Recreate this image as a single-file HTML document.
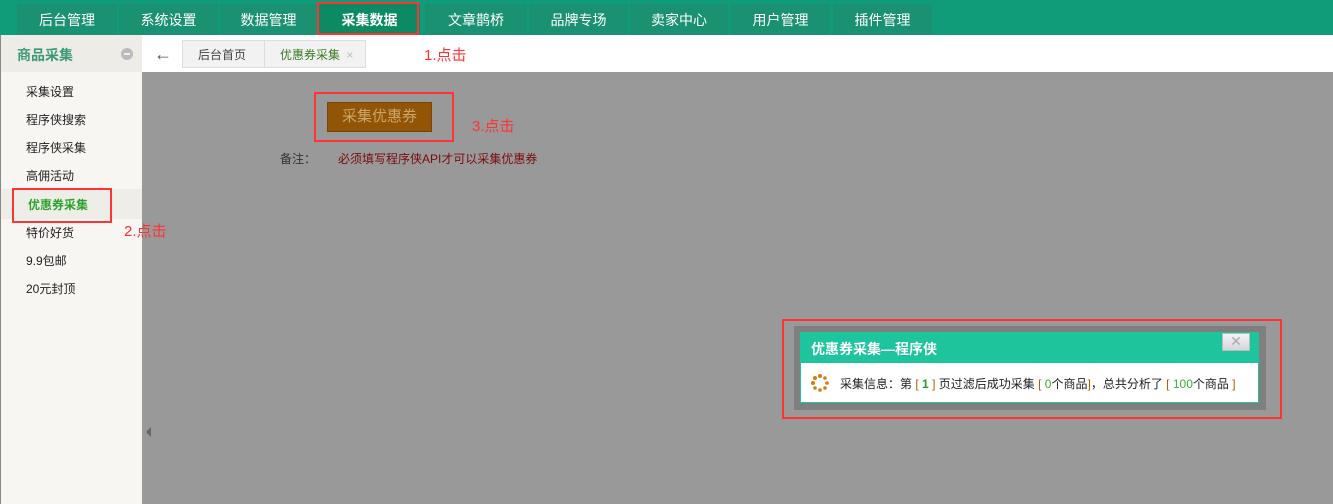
<!DOCTYPE html>
<html><head><meta charset="utf-8"><style>
*{margin:0;padding:0;box-sizing:border-box}
body{width:1333px;height:504px;overflow:hidden;background:#999;font-family:"Liberation Sans","Noto Sans CJK SC",sans-serif;font-size:12px;color:#333;position:relative}
.a{position:absolute}
#nav{left:0;top:0;width:1333px;height:35px;background:#109c79}
.t{position:absolute;top:4px;height:31px;background:#1a9271;color:#fff;font-size:14px;text-align:center;line-height:32px}
#side{left:0;top:35px;width:142px;height:469px;background:#f7f6f2;border-left:1px solid #888}
.m{position:absolute;left:25px;font-size:12px;color:#222}
.red{border:2px solid #f33}
.rt{color:#f33;font-size:15px}
</style></head><body>
<div id="nav" class="a">
<div class="t" style="left:17px;width:100px">后台管理</div>
<div class="t" style="left:119px;width:99px">系统设置</div>
<div class="t" style="left:220px;width:97px">数据管理</div>
<div class="t" style="left:319px;width:101px;background:#0b8a64;font-weight:bold">采集数据</div>
<div class="t" style="left:425px;width:102px">文章鹊桥</div>
<div class="t" style="left:529px;width:99px">品牌专场</div>
<div class="t" style="left:630px;width:98px">卖家中心</div>
<div class="t" style="left:731px;width:99px">用户管理</div>
<div class="t" style="left:833px;width:99px">插件管理</div>
</div>
<div class="a red" style="left:317px;top:2px;width:102px;height:33px"></div>
<div id="side" class="a">
<div class="a" style="left:0;top:0;width:141px;height:37px;background:#eeece6"></div>
<div class="a" style="left:16px;top:10px;font-size:14px;font-weight:bold;color:#3a9a78">商品采集</div>
<div class="a" style="left:120px;top:13px;width:12px;height:12px;border-radius:50%;background:#bbb"><div class="a" style="left:3px;top:5px;width:6px;height:2px;background:#eee"></div></div>
<div class="m" style="top:48px">采集设置</div>
<div class="m" style="top:76px">程序侠搜索</div>
<div class="m" style="top:104px">程序侠采集</div>
<div class="m" style="top:132px">高佣活动</div>
<div class="a" style="left:0;top:154px;width:141px;height:30px;background:#eeede8"></div>
<div class="m" style="top:161px;left:27px;color:#2aa32a;font-weight:bold">优惠券采集</div>
<div class="m" style="top:189px">特价好货</div>
<div class="m" style="top:217px">9.9包邮</div>
<div class="m" style="top:245px">20元封顶</div>
</div>
<div class="a red" style="left:12px;top:188px;width:100px;height:35px"></div>
<div class="a rt" style="left:124px;top:220px">2.点击</div>
<div class="a" style="left:142px;top:35px;width:1191px;height:37px;background:#fff"></div>
<div class="a" style="left:154px;top:44px;font-size:18px;color:#555;font-weight:bold">←</div>
<div class="a" style="left:182px;top:40px;width:184px;height:28px;border:1px solid #ddd;background:#f2f2f2"></div>
<div class="a" style="left:264px;top:41px;width:1px;height:26px;background:#ddd"></div>
<div class="a" style="left:198px;top:46px;color:#444">后台首页</div>
<div class="a" style="left:280px;top:46px;color:#3a7a20">优惠券采集 <span style="color:#bbb;margin-left:3px">×</span></div>
<div class="a rt" style="left:424px;top:44px">1.点击</div>
<div class="a" style="left:146px;top:427px;width:0;height:0;border-top:5px solid transparent;border-bottom:5px solid transparent;border-right:5px solid #666"></div>
<div class="a red" style="left:314px;top:92px;width:140px;height:50px"></div>
<div class="a" style="left:327px;top:102px;width:105px;height:30px;background:#925506;border:1px solid #7a4505;color:#c9a66a;font-size:15px;text-align:center;line-height:28px">采集优惠券</div>
<div class="a rt" style="left:472px;top:115px">3.点击</div>
<div class="a" style="left:280px;top:150px;color:#333">备注：</div>
<div class="a" style="left:338px;top:150px;color:#7a0b0b">必须填写程序侠API才可以采集优惠券</div>
<div class="a red" style="left:782px;top:319px;width:500px;height:100px"></div>
<div class="a" style="left:794px;top:326px;width:472px;height:84px;background:#7f7f7f"></div>
<div class="a" style="left:800px;top:332px;width:459px;height:71px;background:#fff;border:1px solid #1ec49c"></div>
<div class="a" style="left:800px;top:332px;width:459px;height:31px;background:#1ec49c"></div>
<div class="a" style="left:811px;top:339px;color:#fff;font-size:14px;font-weight:bold">优惠券采集—程序侠</div>
<div class="a" style="left:1222px;top:333px;width:28px;height:18px;background:linear-gradient(#f4f4f6,#d4d6dc);border:1px solid #bbb;color:#aaa;text-align:center;line-height:15px;font-size:14px">✕</div>
<svg class="a" style="left:810px;top:373px" width="20" height="20" viewBox="0 0 20 20"><g fill="#d87a10"><circle cx="10" cy="3" r="2"/><circle cx="15" cy="5" r="1.8"/><circle cx="17" cy="10" r="1.8"/><circle cx="15" cy="15" r="1.8"/><circle cx="10" cy="17" r="1.8"/><circle cx="5" cy="15" r="1.8"/><circle cx="3" cy="10" r="2"/><circle cx="5" cy="5" r="2"/></g></svg>
<div class="a" style="left:840px;top:375px;color:#222">采集信息：第 <span style="color:#b06000">[</span> <b style="color:#2a9a2a">1</b> <span style="color:#b06000">]</span> 页过滤后成功采集 <span style="color:#b06000">[</span> <span style="color:#3ab03a">0</span>个商品<span style="color:#b06000">]</span>，总共分析了 <span style="color:#b06000">[</span> <span style="color:#3ab03a">100</span>个商品 <span style="color:#b06000">]</span></div>
</body></html>
